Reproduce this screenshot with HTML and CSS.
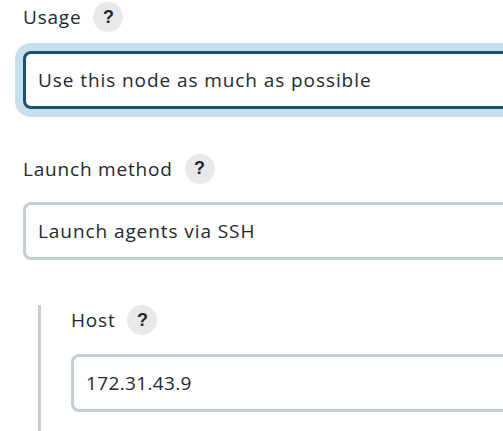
FILE: index.html
```html
<!DOCTYPE html>
<html lang="en">
<head>
<meta charset="utf-8">
<title>Node settings</title>
<link rel="stylesheet" href="styles.css">
</head>
<body>
<main class="form">
  <section class="item">
    <div class="label-row"><span class="label">Usage</span><span class="help">?</span></div>
    <div class="field focused">Use this node as much as possible</div>
  </section>
  <section class="item">
    <div class="label-row"><span class="label">Launch method</span><span class="help">?</span></div>
    <div class="field">Launch agents via SSH</div>
  </section>
  <section class="nested">
    <div class="label-row"><span class="label">Host</span><span class="help">?</span></div>
    <div class="field numeric">172.31.43.9</div>
  </section>
</main>
</body>
</html>
```
FILE: styles.css
```css
html, body {
  margin: 0;
  padding: 0;
  height: 100%;
  overflow: hidden;
  background: #fff;
}
.form {
  width: 640px;
  padding: 2px 0 0 23px;
  font-family: "Open Sans", "Noto Sans", sans-serif;
  font-size: 19px;
  letter-spacing: 0.8px;
  color: #24282e;
}
.item {
  margin-bottom: 45px;
}
.label-row {
  display: flex;
  align-items: center;
  gap: 12px;
  height: 30px;
  margin-bottom: 18.5px;
}
.label {
  line-height: 30px;
}
.help {
  width: 30px;
  height: 30px;
  border-radius: 50%;
  background: #e9e9ec;
  display: flex;
  align-items: center;
  justify-content: center;
  font-family: "Liberation Sans", sans-serif;
  font-weight: 700;
  font-size: 18px;
  letter-spacing: 0;
  color: #24282e;
}
.field {
  height: 58px;
  box-sizing: border-box;
  border: 3px solid #c3cfd5;
  border-radius: 8px;
  padding: 0 12px;
  display: flex;
  align-items: center;
  background: #fff;
  letter-spacing: 0.92px;
}
.numeric {
  letter-spacing: 0.36px;
}
.focused {
  border-color: #1a5270;
  box-shadow: 0 0 0 8px #c9dfec;
}
.nested {
  margin: 0 0 0 15px;
  border-left: 3px solid #c3cfd5;
  padding-left: 30px;
  padding-bottom: 40px;
}
```
